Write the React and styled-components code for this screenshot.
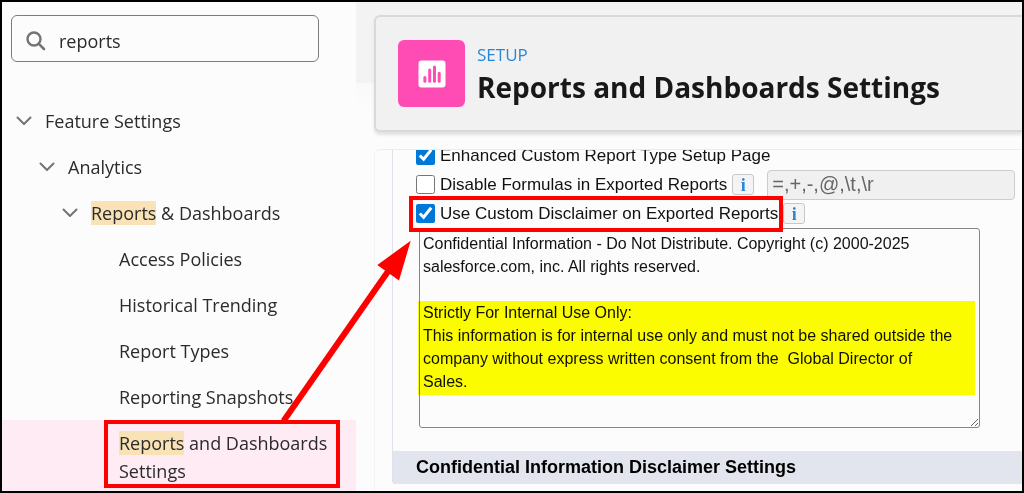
import { useState } from "react"
import styled, { createGlobalStyle } from "styled-components"

const treeItems = [
  { match: "", label: "Feature Settings", level: 0 },
  { match: "", label: "Analytics", level: 1 },
  { match: "Reports", label: " & Dashboards", level: 2 },
  { match: "", label: "Access Policies", level: 3 },
  { match: "", label: "Historical Trending", level: 3 },
  { match: "", label: "Report Types", level: 3 },
  { match: "", label: "Reporting Snapshots", level: 3 },
  { match: "Reports", label: " and Dashboards Settings", level: 3, active: true },
]

const disclaimerText = `Confidential Information - Do Not Distribute. Copyright (c) 2000-2025
salesforce.com, inc. All rights reserved.

Strictly For Internal Use Only:
This information is for internal use only and must not be shared outside the
company without express written consent from the  Global Director of
Sales.`

function Sidebar() {
  const [query, setQuery] = useState("reports")

  return (
    <StyledSidebar>
      <SearchBox>
        <svg width="20" height="20" viewBox="0 0 20 20" fill="none" stroke="#747474" aria-hidden="true">
          <circle cx="8" cy="8" r="6.5" strokeWidth="2.4" />
          <path d="M12.8 12.8 L18 18" strokeWidth="2.6" strokeLinecap="round" />
        </svg>
        <input
          type="text"
          aria-label="Quick Find"
          value={query}
          onChange={(e) => setQuery(e.target.value)}
        />
      </SearchBox>
      <Tree>
        {treeItems.map((item) => (
          <TreeLink
            key={item.match + item.label}
            href="#"
            $level={item.level}
            $active={item.active}
            aria-current={item.active ? "page" : undefined}
          >
            {item.level < 3 && (
              <svg width="16" height="10" viewBox="0 0 16 10" fill="none" stroke="#747474" aria-hidden="true">
                <path d="M1.5 1.5 L8 8 L14.5 1.5" strokeWidth="2" strokeLinecap="round" strokeLinejoin="round" />
              </svg>
            )}
            <span>
              {item.match && <mark>{item.match}</mark>}
              {item.label}
            </span>
          </TreeLink>
        ))}
      </Tree>
    </StyledSidebar>
  )
}

function Header() {
  return (
    <StyledHeader>
      <HeaderIcon>
        <svg width="28" height="28" viewBox="0 0 28 28" aria-hidden="true">
          <rect x="0.5" y="0.5" width="27" height="27" rx="3" fill="#fff" />
          <g stroke="#ff4bb4" strokeWidth="3" strokeLinecap="round">
            <path d="M6.9 17.5 V21.2" />
            <path d="M11.7 10 V21.2" />
            <path d="M16.5 7 V21.2" />
            <path d="M21.2 13.2 V21.2" />
          </g>
        </svg>
      </HeaderIcon>
      <div>
        <Eyebrow>SETUP</Eyebrow>
        <Title>Reports and Dashboards Settings</Title>
      </div>
    </StyledHeader>
  )
}

function Settings() {
  return (
    <Panel>
      <PanelBody>
        <Options>
          <OptionRow>
            <Checkbox id="enhanced" type="checkbox" defaultChecked />
            <label htmlFor="enhanced">Enhanced Custom Report Type Setup Page</label>
          </OptionRow>
          <OptionRow>
            <Checkbox id="formulas" type="checkbox" />
            <label htmlFor="formulas">Disable Formulas in Exported Reports</label>
            <InfoButton type="button" aria-label="About formulas">i</InfoButton>
            <FormulaInput aria-label="Formula characters" defaultValue="=,+,-,@,\t,\r" disabled />
          </OptionRow>
          <OptionRow>
            <Callout>
              <Checkbox id="disclaimer" type="checkbox" defaultChecked />
              <label htmlFor="disclaimer">Use Custom Disclaimer on Exported Reports</label>
            </Callout>
            <InfoButton type="button" aria-label="About the disclaimer">i</InfoButton>
          </OptionRow>
          <Disclaimer>
            <textarea aria-label="Custom disclaimer" defaultValue={disclaimerText} spellCheck="false" />
            <Highlighter />
          </Disclaimer>
        </Options>
        <SectionTitle>Confidential Information Disclaimer Settings</SectionTitle>
      </PanelBody>
    </Panel>
  )
}

export default function App() {
  return (
    <>
      <GlobalStyle />
      <Page>
        <Sidebar />
        <Main>
          <Header />
          <Settings />
        </Main>
        <Arrow width="140" height="190" viewBox="0 0 140 190" aria-hidden="true">
          <path d="M11.5 183 L117 32" stroke="#fe0000" strokeWidth="6" />
          <path d="M138.7 2.7 L105.3 27 L127 42.5 Z" fill="#fe0000" />
        </Arrow>
      </Page>
    </>
  )
}

const GlobalStyle = createGlobalStyle`
  * {
    box-sizing: border-box;
  }

  body {
    margin: 0;
    background: #fcfcfc;
    color: #181818;
    font-family: "Open Sans", "Noto Sans", sans-serif;
  }
`

const Page = styled.div`
  position: relative;
  display: grid;
  grid-template-columns: 354px minmax(0, 1fr);
  min-height: 100vh;
  border: 2px solid #000;
`

const StyledSidebar = styled.aside`
  display: flex;
  flex-direction: column;
  gap: 36px;
  padding-top: 13px;
`

const SearchBox = styled.div`
  display: flex;
  align-items: center;
  gap: 13px;
  height: 47px;
  margin-left: 9px;
  margin-right: 37px;
  padding: 4px 14px 0;
  border: 1px solid #7c7c7c;
  border-radius: 6px;

  svg {
    flex: none;
  }

  input {
    flex: 1;
    min-width: 0;
    padding: 0;
    border: 0;
    outline: 0;
    background: transparent;
    color: #2b2b2b;
    font-family: inherit;
    font-size: 18px;
  }
`

const Tree = styled.nav`
  display: flex;
  flex-direction: column;
`

const TreeLink = styled.a`
  position: relative;
  display: flex;
  align-items: center;
  gap: 13px;
  padding: 9px 16px ${(props) => (props.$active ? 6 : 9)}px
    ${(props) => (props.$level === 3 ? 117 : 14 + props.$level * 23)}px;
  background: ${(props) => (props.$active ? "#feebf4" : "transparent")};
  color: #2b2b2b;
  font-size: 18px;
  line-height: 28px;
  text-decoration: none;

  svg {
    flex: none;
  }

  mark {
    background: #f9e3b6;
    color: inherit;
  }

  &::after {
    content: "";
    display: ${(props) => (props.$active ? "block" : "none")};
    position: absolute;
    inset: 0 16px 3px 102px;
    border: 4px solid #fe0000;
  }
`

const Main = styled.main`
  display: flex;
  flex-direction: column;
  padding-top: 13px;
  padding-left: 18px;
  background: linear-gradient(#f3f3f3 81px, #f9f9f9 81px, #fcfcfc 104px);
  overflow: hidden;
`

const StyledHeader = styled.header`
  display: flex;
  align-items: center;
  gap: 12px;
  height: 117px;
  padding: 0 22px;
  border: 2px solid #d9d9d9;
  border-right: 0;
  border-radius: 6px 0 0 6px;
  background: #f1f1f1;
  box-shadow: 0 3px 3px #e2e2e6;
`

const HeaderIcon = styled.div`
  display: grid;
  place-items: center;
  flex: none;
  width: 67px;
  height: 67px;
  border-radius: 6px;
  background: #ff4bb4;
`

const Eyebrow = styled.div`
  color: #2a87d8;
  font-size: 17px;
  line-height: 26px;
`

const Title = styled.h1`
  margin: 0;
  font-size: 28px;
  line-height: 38px;
  font-weight: 700;
  white-space: nowrap;
`

const Panel = styled.section`
  flex: 1;
  margin-top: 17px;
  padding-left: 17px;
  border-top: 1px solid #ededf0;
  border-left: 1px solid #f3f3f5;
  border-radius: 6px 0 0 0;
  overflow: hidden;
  color: #111;
  font-family: "Liberation Sans", Arial, sans-serif;
  font-size: 17px;
`

const PanelBody = styled.div`
  height: 100%;
  border-left: 1px solid #dfe1ec;
`

/* scrolled up a little, so the first option is cut by the panel's edge */
const Options = styled.div`
  margin-top: -9px;
  padding: 0 7px 23px 23px;
`

const OptionRow = styled.div`
  display: flex;
  align-items: center;
  gap: 5px;
  height: 29px;
  white-space: nowrap;
`

const Checkbox = styled.input`
  flex: none;
  width: 19px;
  height: 19px;
  margin: 0;
  accent-color: #0078d7;
`

const Callout = styled.div`
  position: relative;
  z-index: 1;
  display: flex;
  align-items: center;
  gap: 5px;

  &::after {
    content: "";
    position: absolute;
    inset: -8px -5px -8px -7px;
    border: 4px solid #fe0000;
    pointer-events: none;
  }
`

const InfoButton = styled.button`
  flex: none;
  width: 22px;
  height: 21px;
  padding: 0;
  border: 1px solid #c8c8c8;
  border-radius: 3px;
  background: #f4f4f4;
  color: #2a87d8;
  font-family: "Liberation Serif", serif;
  font-size: 18px;
  font-weight: 700;
  line-height: 18px;
`

const FormulaInput = styled.input`
  flex: 1;
  min-width: 0;
  height: 30px;
  margin-left: 8px;
  padding: 0 4px;
  border: 1px solid #ccc;
  border-radius: 4px;
  background: #f0f0f0;
  color: #666;
  font-family: inherit;
  font-size: 20px;
`

const Disclaimer = styled.div`
  position: relative;
  margin-left: 3px;
  margin-right: 35px;

  textarea {
    display: block;
    width: 100%;
    height: 200px;
    padding: 3px;
    border: 1px solid #858585;
    border-radius: 3px;
    outline: 0;
    background: #fcfcfc;
    color: #111;
    font-family: inherit;
    font-size: 16px;
    line-height: 23px;
    overflow: hidden;
  }
`

/* marker pen over the added lines */
const Highlighter = styled.div`
  position: absolute;
  top: 73px;
  left: -1px;
  right: 5px;
  height: 94px;
  background: #ff0;
  mix-blend-mode: multiply;
  pointer-events: none;
`

const SectionTitle = styled.h2`
  margin: 0;
  padding: 0 23px;
  background: #e2e4ee;
  color: #000;
  font-size: 18px;
  line-height: 33px;
`

const Arrow = styled.svg`
  position: absolute;
  top: 236px;
  left: 270px;
  pointer-events: none;
`
